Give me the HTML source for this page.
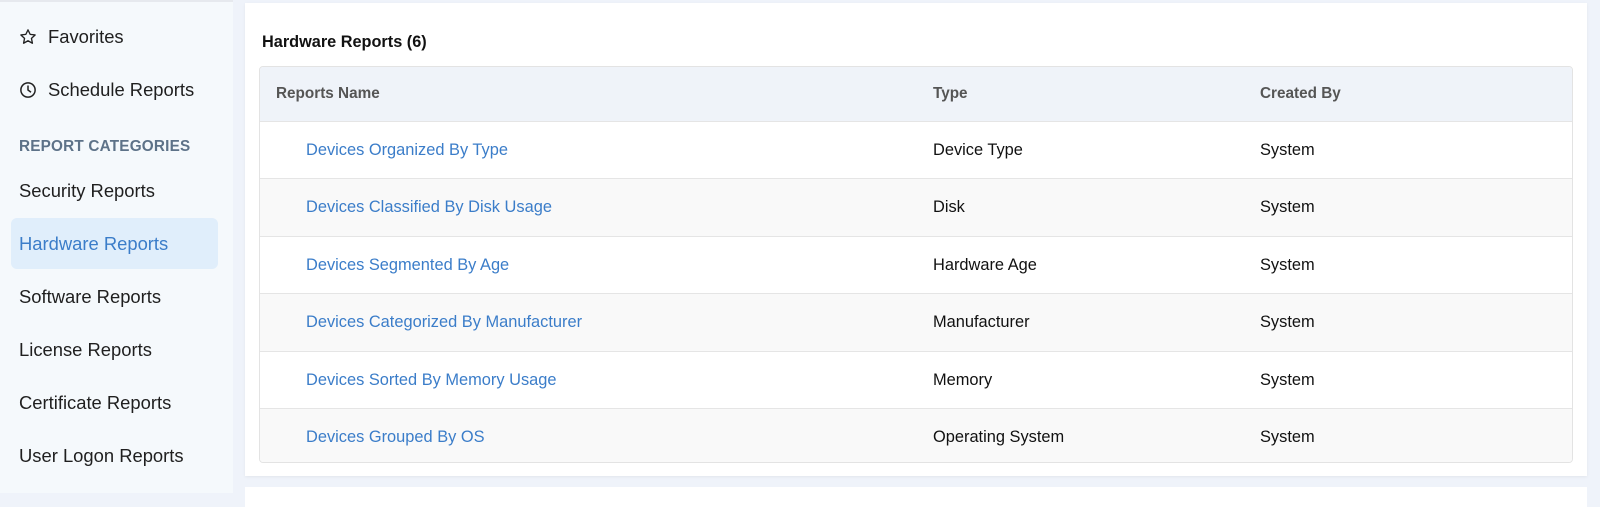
<!DOCTYPE html>
<html><head><style>
*{margin:0;padding:0;box-sizing:border-box}
body{width:1600px;height:493px;background:#eff3fa;font-family:"Liberation Sans",sans-serif;position:relative;overflow:hidden}
.side{position:absolute;left:0;top:0;width:233px;height:493px;background:#f5f9fc;border-top:2px solid #e6e9ee}
.si{position:absolute;left:19px;font-size:18.4px;color:#1f1f1f}
.cat{position:absolute;left:19px;top:136px;font-size:15.3px;font-weight:bold;color:#5d7288;letter-spacing:.2px}
.act{position:absolute;left:11px;top:216px;width:207px;height:51px;background:#e0eefb;border-radius:6px}
.card{position:absolute;left:245px;top:3px;width:1342px;height:473px;background:#fff;box-shadow:0 1px 3px rgba(0,0,0,.06)}
.card2{position:absolute;left:245px;top:487px;width:1342px;height:20px;background:#fff}
.title{position:absolute;left:17px;top:30px;font-size:16.3px;font-weight:bold;color:#111}
.tbl{position:absolute;left:14px;top:63px;width:1314px;height:397px;border:1px solid #e3e3e3;border-radius:4px;overflow:hidden}
.row{position:absolute;left:0;width:100%;height:57.4px;border-top:1px solid #e5e5e5;font-size:16.4px;color:#111}
.row span{position:absolute;top:19px}
.hd{top:0;height:54px;background:#eff3f9;border:none;color:#555;font-weight:bold;font-size:15.3px}
.hd span{top:18px}
a{color:#3b7dc9;text-decoration:none}
</style></head><body>
<div class="side">
<svg style="position:absolute;left:19px;top:26px" width="18" height="18" viewBox="0 0 24 24" fill="none" stroke="#222" stroke-width="1.8" stroke-linejoin="round"><path d="M12 2.5l2.9 6 6.6.8-4.9 4.5 1.3 6.5L12 17l-5.9 3.3 1.3-6.5L2.5 9.3l6.6-.8z"/></svg>
<div class="si" style="left:48px;top:24px">Favorites</div>
<svg style="position:absolute;left:19px;top:79px" width="18" height="18" viewBox="0 0 24 24" fill="none" stroke="#222" stroke-width="2"><circle cx="12" cy="12" r="9.5"/><path d="M12 6v6l4 3"/></svg>
<div class="si" style="left:48px;top:77px">Schedule Reports</div>
<div class="cat">REPORT CATEGORIES</div>
<div class="si" style="top:178px">Security Reports</div>
<div class="act"></div>
<div class="si" style="top:231px;color:#3b7dc9">Hardware Reports</div>
<div class="si" style="top:284px">Software Reports</div>
<div class="si" style="top:337px">License Reports</div>
<div class="si" style="top:390px">Certificate Reports</div>
<div class="si" style="top:443px">User Logon Reports</div>
</div>
<div class="card">
<div class="title">Hardware Reports (6)</div>
<div class="tbl">
<div class="row hd"><span style="left:16px">Reports Name</span><span style="left:673px">Type</span><span style="left:1000px">Created By</span></div>
<div class="row" style="top:54px;background:#fff"><span style="left:46px"><a>Devices Organized By Type</a></span><span style="left:673px">Device Type</span><span style="left:1000px">System</span></div>
<div class="row" style="top:111.4px;background:#f9f9f9"><span style="left:46px"><a>Devices Classified By Disk Usage</a></span><span style="left:673px">Disk</span><span style="left:1000px">System</span></div>
<div class="row" style="top:168.8px;background:#fff"><span style="left:46px"><a>Devices Segmented By Age</a></span><span style="left:673px">Hardware Age</span><span style="left:1000px">System</span></div>
<div class="row" style="top:226.2px;background:#f9f9f9"><span style="left:46px"><a>Devices Categorized By Manufacturer</a></span><span style="left:673px">Manufacturer</span><span style="left:1000px">System</span></div>
<div class="row" style="top:283.6px;background:#fff"><span style="left:46px"><a>Devices Sorted By Memory Usage</a></span><span style="left:673px">Memory</span><span style="left:1000px">System</span></div>
<div class="row" style="top:341px;background:#f9f9f9"><span style="left:46px"><a>Devices Grouped By OS</a></span><span style="left:673px">Operating System</span><span style="left:1000px">System</span></div>
</div>
</div>
<div class="card2"></div>
</body></html>
